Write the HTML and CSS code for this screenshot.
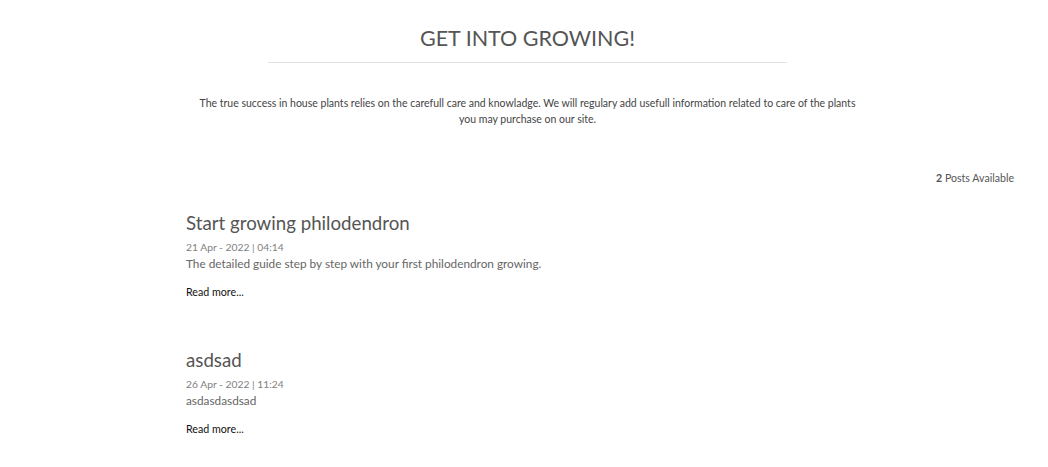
FILE: index.html
```html
<!DOCTYPE html>
<html>
<head>
<meta charset="utf-8">
<link rel="stylesheet" href="styles.css">
</head>
<body>
<div class="page">
  <header class="intro">
    <h1 class="intro-title">GET INTO GROWING!</h1>
    <hr class="intro-rule">
    <p class="intro-text">The true success in house plants relies on the carefull care and knowladge. We will regulary add usefull information related to care of the plants you may purchase on our site.</p>
  </header>
  <div class="count"><b>2</b> Posts Available</div>
  <section class="posts">
    <article class="post">
      <h2 class="post-title">Start growing philodendron</h2>
      <div class="post-date">21 Apr - 2022 | 04:14</div>
      <div class="post-desc">The detailed guide step by step with your first philodendron growing.</div>
      <a class="post-more" href="#">Read more...</a>
    </article>
    <article class="post">
      <h2 class="post-title">asdsad</h2>
      <div class="post-date">26 Apr - 2022 | 11:24</div>
      <div class="post-desc">asdasdasdsad</div>
      <a class="post-more" href="#">Read more...</a>
    </article>
  </section>
</div>
</body>
</html>
```
FILE: styles.css
```css
html, body {
  margin: 0;
  padding: 0;
  background: #fff;
}
body {
  font-family: Lato, "Open Sans", sans-serif;
  color: #555;
}
.intro {
  display: flex;
  flex-direction: column;
  align-items: center;
  padding: 25px 0 0 7px;
}
.intro-title {
  margin: 0;
  font-size: 21.5px;
  font-weight: 400;
  line-height: 26px;
  color: #555;
}
.intro-rule {
  width: 519px;
  margin: 11px 0 0 0;
  border: 0;
  border-top: 1px solid #e2e2e2;
}
.intro-text {
  margin: 32px 0 0 0;
  max-width: 662px;
  text-align: center;
  font-size: 10.5px;
  line-height: 16px;
  color: #444;
}
.count {
  margin-top: 44px;
  padding-right: 34px;
  text-align: right;
  font-size: 10.6px;
  line-height: 14px;
  color: #555;
}
.count b {
  font-weight: 700;
}
.posts {
  padding-left: 186px;
  margin-top: 26px;
  display: flex;
  flex-direction: column;
  gap: 49px;
}
.post {
  display: flex;
  flex-direction: column;
  align-items: flex-start;
}
.post-title {
  margin: 0;
  font-size: 18.7px;
  font-weight: 400;
  line-height: 24px;
  color: #555;
}
.post-date {
  margin-top: 5px;
  font-size: 10.3px;
  line-height: 14px;
  color: #808080;
}
.post-desc {
  margin-top: 1px;
  font-size: 11.8px;
  line-height: 17px;
  color: #666;
}
.post-more {
  margin-top: 13px;
  font-size: 10.7px;
  line-height: 14px;
  color: #111;
  text-decoration: none;
}
```
